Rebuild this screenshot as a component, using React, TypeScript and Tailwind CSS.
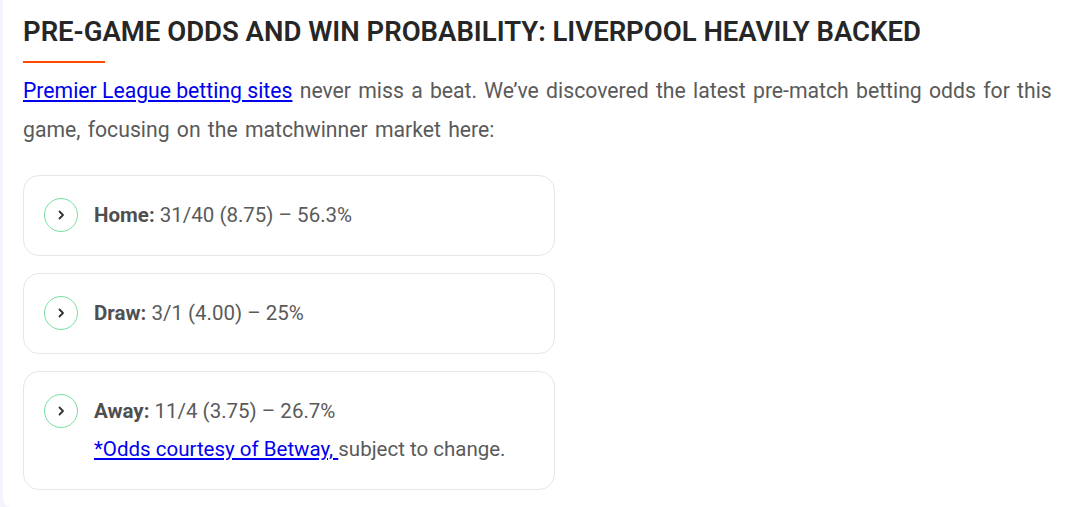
import React from "react";

function Chevron() {
  return (
    <svg width="10" height="12" viewBox="0 0 10 12" fill="none">
      <path d="M3.5 2.5 L7 6 L3.5 9.5" stroke="#333" strokeWidth="1.8" strokeLinecap="round" strokeLinejoin="round" />
    </svg>
  );
}

function Circle() {
  return (
    <div className="w-[34px] h-[34px] shrink-0 rounded-full border border-[#74df9f] flex items-center justify-center">
      <Chevron />
    </div>
  );
}

function Card({ label, value, children }: { label: string; value: string; children?: React.ReactNode }) {
  return (
    <div className="w-[532px] rounded-[16px] border border-[#e6e6e6] bg-white px-[20px] py-[20.5px] flex gap-[16px]">
      <div className="h-[38px] flex items-center">
        <Circle />
      </div>
      <div className="flex flex-col text-[20.5px] leading-[38px] text-[#5a5a5a]">
        <div>
          <span className="font-bold text-[#4f4f4f]">{label}:</span> {value}
        </div>
        {children}
      </div>
    </div>
  );
}

export default function App() {
  return (
    <div className="w-[1078px] h-[507px] bg-[#f4f4fd] pl-[3px] overflow-hidden" style={{ fontFamily: "Roboto, 'Liberation Sans', sans-serif" }}>
      <div className="h-full bg-white rounded-bl-[8px] pl-[20px] pr-[10px] pt-[15px]">
        <h2 className="text-[27.5px] leading-[34px] font-semibold text-[#262626]">
          PRE-GAME ODDS AND WIN PROBABILITY: LIVERPOOL HEAVILY BACKED
        </h2>
        <div className="mt-[12px] w-[82px] h-[1.5px] bg-[#ff4a00]" />
        <p className="mt-[8px] text-[21.2px] leading-[39px] text-[#5a5a5a]">
          <a href="#" className="text-[#0000ee] underline">Premier League betting sites</a>
          <span className="[word-spacing:2px]"> never miss a beat. We’ve discovered the latest pre-match betting odds for this game, focusing on the matchwinner market here:</span>
        </p>
        <div className="mt-[26px] flex flex-col gap-[17px]">
          <Card label="Home" value="31/40 (8.75) – 56.3%" />
          <Card label="Draw" value="3/1 (4.00) – 25%" />
          <Card label="Away" value="11/4 (3.75) – 26.7%">
            <div>
              <a href="#" className="text-[#0000ee] underline">*Odds courtesy of Betway, </a>subject to change.
            </div>
          </Card>
        </div>
      </div>
    </div>
  );
}
